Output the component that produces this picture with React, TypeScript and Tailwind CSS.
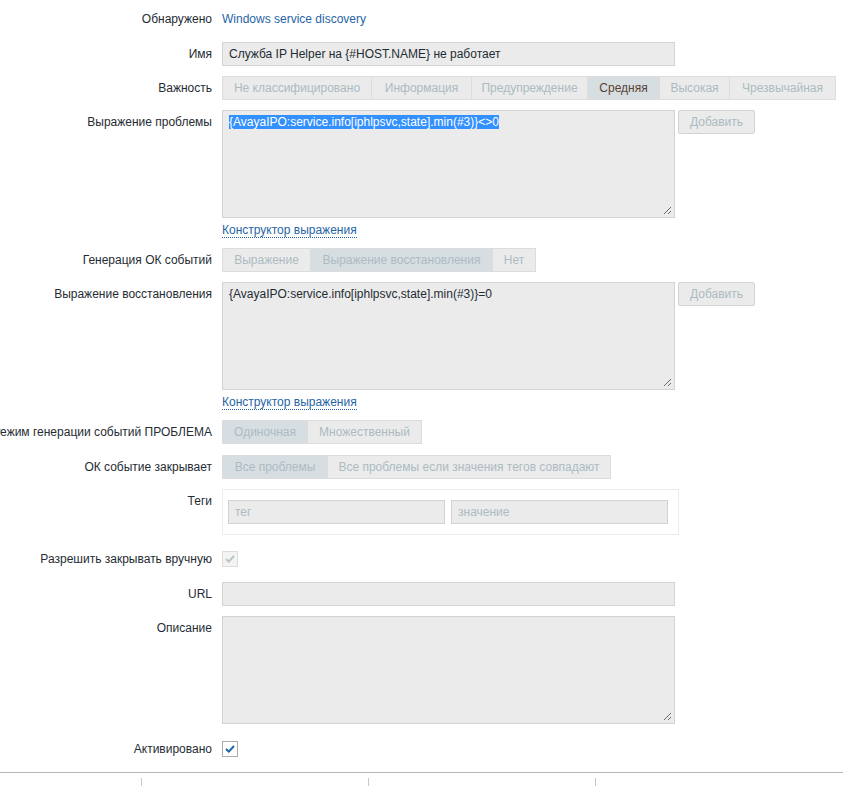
import type { ReactNode } from "react";

type Seg = { label: string; w: number; on?: boolean; dark?: boolean };

function Row({ label, children, className = "" }: { label: string; children: ReactNode; className?: string }) {
  return (
    <div className={`flex items-start ${className}`}>
      <div className="flex h-[24px] w-[212px] shrink-0 justify-end whitespace-nowrap leading-[24px] text-[#1f2c33]">
        <span>{label}</span>
      </div>
      <div className="ml-[10px]">{children}</div>
    </div>
  );
}

function Segmented({ items }: { items: Seg[] }) {
  return (
    <div className="flex h-[24px] border border-[#dcdcdc] bg-[#ebebeb]">
      {items.map((s, i) => (
        <div
          key={s.label}
          style={{ width: s.w - (i === 0 ? 1 : 0) }}
          className={`flex items-center justify-center whitespace-nowrap leading-[22px] ${
            i > 0 ? "border-l border-[#dcdcdc]" : ""
          } ${s.on ? "bg-[#d7dee2]" : ""} ${s.dark ? "text-[#5a4232]" : "text-[#acbbc2]"}`}
        >
          {s.label}
        </div>
      ))}
    </div>
  );
}

function Grip() {
  return (
    <svg className="absolute bottom-[2px] right-[2px]" width="9" height="9" viewBox="0 0 9 9">
      <path d="M8 1L1 8M8 5L5 8" stroke="#6b6b6b" strokeWidth="1" fill="none" />
    </svg>
  );
}

function TextArea({ children }: { children?: ReactNode }) {
  return (
    <div className="relative h-[108px] w-[453px] border border-[#d3d3d3] bg-[#ebebeb] px-[6px] pt-[3px] leading-[16px] text-[#1f2c33]">
      {children}
      <Grip />
    </div>
  );
}

function AddButton() {
  return (
    <div className="ml-[3px] flex h-[24px] w-[77px] items-center justify-center rounded-[2px] border border-[#d3d3d3] bg-[#ebebeb] text-[#acbbc2]">
      Добавить
    </div>
  );
}

function BuilderLink() {
  return (
    <div className="mt-[4px] h-[20px] leading-[16px]">
      <span className="border-b border-dotted border-[#1f65a6] text-[#1f65a6]">Конструктор выражения</span>
    </div>
  );
}

function Check({ enabled }: { enabled?: boolean }) {
  return (
    <div
      className={`mt-[4px] flex h-[16px] w-[16px] items-center justify-center border ${
        enabled ? "border-[#acacac] bg-white" : "border-[#dcdcdc] bg-[#f4f4f4]"
      }`}
    >
      <svg width="10" height="8" viewBox="0 0 10 8">
        <path
          d="M1 4L3.8 6.6L9 1"
          stroke={enabled ? "#1f65a6" : "#b8c4ca"}
          strokeWidth="2"
          fill="none"
        />
      </svg>
    </div>
  );
}

export default function App() {
  return (
    <div
      className="min-h-[786px] w-[843px] overflow-hidden bg-white text-[12px]"
      style={{ fontFamily: '"Liberation Sans", Arial, sans-serif' }}
    >
      <div className="pt-[7px]">
        <Row label="Обнаружено">
          <div className="leading-[24px] text-[#1f65a6]">Windows service discovery</div>
        </Row>

        <Row label="Имя" className="mt-[11px]">
          <div className="h-[24px] w-[453px] border border-[#d3d3d3] bg-[#ebebeb] px-[6px] leading-[22px] text-[#1f2c33]">
            Служба IP Helper на {"{#HOST.NAME}"} не работает
          </div>
        </Row>

        <Row label="Важность" className="mt-[10px]">
          <Segmented
            items={[
              { label: "Не классифицировано", w: 149 },
              { label: "Информация", w: 100 },
              { label: "Предупреждение", w: 116 },
              { label: "Средняя", w: 72, on: true, dark: true },
              { label: "Высокая", w: 70 },
              { label: "Чрезвычайная", w: 106 },
            ]}
          />
        </Row>

        <Row label="Выражение проблемы" className="mt-[10px]">
          <div className="flex items-start">
            <TextArea>
              <span className="bg-[#3390ff] text-white">
                {"{AvayaIPO:service.info[iphlpsvc,state].min(#3)}<>0"}
              </span>
            </TextArea>
            <AddButton />
          </div>
          <BuilderLink />
        </Row>

        <Row label="Генерация ОК событий" className="mt-[6px]">
          <Segmented
            items={[
              { label: "Выражение", w: 88 },
              { label: "Выражение восстановления", w: 182, on: true },
              { label: "Нет", w: 43 },
            ]}
          />
        </Row>

        <Row label="Выражение восстановления" className="mt-[10px]">
          <div className="flex items-start">
            <TextArea>{"{AvayaIPO:service.info[iphlpsvc,state].min(#3)}=0"}</TextArea>
            <AddButton />
          </div>
          <BuilderLink />
        </Row>

        <Row label="Режим генерации событий ПРОБЛЕМА" className="mt-[6px]">
          <Segmented
            items={[
              { label: "Одиночная", w: 85, on: true },
              { label: "Множественный", w: 114 },
            ]}
          />
        </Row>

        <Row label="ОК событие закрывает" className="mt-[11px]">
          <Segmented
            items={[
              { label: "Все проблемы", w: 105, on: true },
              { label: "Все проблемы если значения тегов совпадают", w: 283 },
            ]}
          />
        </Row>

        <Row label="Теги" className="mt-[10px]">
          <div className="flex w-[457px] gap-[6px] border border-[#ebebeb] pb-[10px] pl-[5px] pr-[10px] pt-[10px]">
            <div className="h-[24px] w-[217px] border border-[#d3d3d3] bg-[#ebebeb] px-[6px] leading-[22px] text-[#acbbc2]">
              тег
            </div>
            <div className="h-[24px] w-[217px] border border-[#d3d3d3] bg-[#ebebeb] px-[6px] leading-[22px] text-[#acbbc2]">
              значение
            </div>
          </div>
        </Row>

        <Row label="Разрешить закрывать вручную" className="mt-[12px]">
          <Check />
        </Row>

        <Row label="URL" className="mt-[11px]">
          <div className="h-[24px] w-[453px] border border-[#d3d3d3] bg-[#ebebeb]" />
        </Row>

        <Row label="Описание" className="mt-[10px]">
          <TextArea />
        </Row>

        <Row label="Активировано" className="mt-[13px]">
          <Check enabled />
        </Row>

        <div className="mt-[11px] h-px w-full bg-[#b4b4b4]" />
        <div className="mt-[5px] flex h-[9px]">
          <div className="w-[141px]" />
          <div className="w-px bg-[#c8c8c8]" />
          <div className="w-[226px]" />
          <div className="w-px bg-[#c8c8c8]" />
          <div className="w-[226px]" />
          <div className="w-px bg-[#c8c8c8]" />
        </div>
      </div>
    </div>
  );
}
